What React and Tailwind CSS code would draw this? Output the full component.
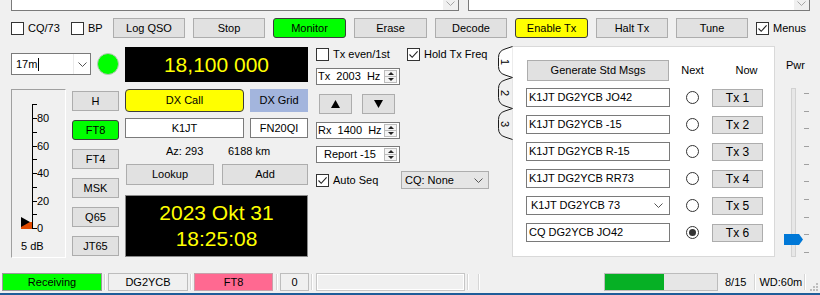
import React from "react";

// shared widget looks (Windows-ish Qt styling)
const btn =
  "flex items-center justify-center bg-[#e1e1e1] border border-[#adadad] text-black";
const hot =
  "flex items-center justify-center border border-[#3c3c3c] rounded-[3px] text-black";
const field = "bg-white border border-[#7a7a7a] flex items-center";

function Chevron({ color = "#555" }) {
  return (
    <svg width="9" height="5" viewBox="0 0 9 5">
      <path d="M0.5 0.5 L4.5 4.5 L8.5 0.5" fill="none" stroke={color} strokeWidth="1" />
    </svg>
  );
}

function Check({ checked, label, className = "" }) {
  return (
    <div className={"flex items-center gap-[4px] " + className}>
      <div className="w-[13px] h-[13px] shrink-0 border border-[#333] bg-white flex items-center justify-center">
        {checked && (
          <svg width="11" height="11" viewBox="0 0 11 11">
            <path d="M1.5 5.5 L4.2 8.3 L9.6 2.4" fill="none" stroke="#222" strokeWidth="1.1" />
          </svg>
        )}
      </div>
      <span>{label}</span>
    </div>
  );
}

function Pane({ w }) {
  return (
    <div className={w + " h-[11px] flex bg-white border-x border-b border-[#7a7a7a]"}>
      <div className="flex-1" />
      <div className="w-[15px] bg-[#f0f0f0] flex justify-center pt-[1px]">
        <Chevron color="#a6a6a6" />
      </div>
    </div>
  );
}

function Spin({ children, pad = "pl-[1px]" }) {
  return (
    <div className={field + " w-[84px] h-[17px]"}>
      <div className={"flex-1 whitespace-pre " + pad}>{children}</div>
      <div className="w-[13px] h-[13px] mr-[2px] border border-[#bcbcbc] bg-[#f4f4f4] flex flex-col">
        <div className="flex-1 flex items-center justify-center border-b border-[#bcbcbc]">
          <svg width="6" height="3" viewBox="0 0 6 3">
            <path d="M0 3 L3 0 L6 3Z" fill="#222" />
          </svg>
        </div>
        <div className="flex-1 flex items-center justify-center">
          <svg width="6" height="3" viewBox="0 0 6 3">
            <path d="M0 0 L3 3 L6 0Z" fill="#222" />
          </svg>
        </div>
      </div>
    </div>
  );
}

function Meter() {
  const ticks = [0, 10, 20, 30, 40, 50, 60, 70, 80, 90];
  return (
    <div className="w-[55px] h-[169px] border-l border-t border-[#a0a0a0] border-r border-r-white border-b border-b-white">
      <svg width="53" height="167" viewBox="0 0 53 167">
        <line x1="20.5" y1="14" x2="20.5" y2="139" stroke="#000" />
        {ticks.map((v) => {
          const y = Math.round(138 - v * 1.375) + 0.5;
          return <line key={v} x1="20" y1={y} x2="25" y2={y} stroke="#000" />;
        })}
        {[0, 20, 40, 60, 80].map((v) => (
          <text
            key={v}
            x="25"
            y={Math.round(138 - v * 1.375) + 4}
            fontSize="11"
            fontFamily="Liberation Sans, Arial, sans-serif"
            fill="#000"
          >
            {v}
          </text>
        ))}
        <rect x="9" y="132" width="11" height="7" fill="#e04a00" />
        <path d="M9 127 L18 132 L9 137Z" fill="#000" />
        <text x="9" y="160" fontSize="11" fontFamily="Liberation Sans, Arial, sans-serif" fill="#000">
          5 dB
        </text>
      </svg>
    </div>
  );
}

function Tabs() {
  const tab = (k) => {
    const T = 31 * k + 0.5;
    const B = T + 31;
    return {
      fill: `M15.5 ${T} L8 ${T + 2.5} Q1.5 ${T + 4.5} 1.5 ${T + 11} L1.5 ${B - 11} Q1.5 ${B - 4.5} 8 ${B - 2.5} L15.5 ${B} Z`,
      stroke: `M15.5 ${T} L8 ${T + 2.5} Q1.5 ${T + 4.5} 1.5 ${T + 11} L1.5 ${B - 11} Q1.5 ${B - 4.5} 8 ${B - 2.5} L15.5 ${B}`,
      mid: (T + B) / 2,
    };
  };
  const t = [tab(0), tab(1), tab(2)];
  return (
    <svg width="16" height="100" viewBox="0 0 16 100" className="relative z-10 -mr-px shrink-0">
      {[2, 1, 0].map((i) => (
        <g key={i}>
          <path d={t[i].fill} fill={i === 0 ? "#ffffff" : "#f0f0f0"} />
          <path d={t[i].stroke} fill="none" stroke="#1a1a1a" strokeWidth="1" />
          <text
            transform={`translate(4 ${t[i].mid}) rotate(90)`}
            textAnchor="middle"
            fontSize="11"
            fontFamily="Liberation Sans, Arial, sans-serif"
            fill="#000"
          >
            {i + 1}
          </text>
        </g>
      ))}
    </svg>
  );
}

function Radio({ on }) {
  return (
    <div className="w-[13px] h-[13px] rounded-full border border-[#333] bg-white flex items-center justify-center">
      {on && <div className="w-[7px] h-[7px] rounded-full bg-[#333]" />}
    </div>
  );
}

const msgs = [
  "K1JT DG2YCB JO42",
  "K1JT DG2YCB -15",
  "K1JT DG2YCB R-15",
  "K1JT DG2YCB RR73",
  "K1JT DG2YCB 73",
  "CQ DG2YCB JO42",
];

function PwrSlider() {
  const ticks = [5, 23, 40, 58, 76, 93, 111, 129, 146, 164];
  return (
    <svg width="46" height="170" viewBox="0 0 46 170">
      <rect x="16.5" y="0.5" width="4" height="168" fill="#e7e7e7" stroke="#d2d2d2" />
      {ticks.map((y) => (
        <line key={y} x1="29" y1={y + 0.5} x2="34" y2={y + 0.5} stroke="#a0a0a0" />
      ))}
      <path d="M9 146 L24 146 L28 151.5 L24 157 L9 157Z" fill="#0078d7" />
    </svg>
  );
}

function Sep({ className = "" }) {
  return <div className={"w-[2px] h-[16px] border-l border-[#d6d6d6] border-r border-r-white " + className} />;
}

export default function App() {
  return (
    <div className="w-[820px] h-[295px] overflow-hidden bg-[#f0f0f0] text-[11px] leading-none text-black font-['Liberation_Sans',Arial,sans-serif] flex flex-col">
      {/* bottom edge of the decode panes */}
      <div className="flex h-[11px] pl-[11px] gap-[9px] shrink-0">
        <Pane w="w-[448px]" />
        <Pane w="w-[342px]" />
      </div>

      {/* control buttons */}
      <div className="mt-[7px] h-[20px] flex items-center pl-[11px] shrink-0">
        <Check label="CQ/73" className="w-[60px]" />
        <Check label="BP" className="w-[42px]" />
        <div className="flex gap-[8px] h-[20px]">
          <div className={btn + " w-[72px]"}>Log QSO</div>
          <div className={btn + " w-[72px]"}>Stop</div>
          <div className={hot + " w-[73px] bg-[#00ff00]"}>Monitor</div>
          <div className={btn + " w-[73px]"}>Erase</div>
          <div className={btn + " w-[72px]"}>Decode</div>
          <div className={hot + " w-[73px] bg-[#ffff00]"}>Enable Tx</div>
          <div className={btn + " w-[72px]"}>Halt Tx</div>
          <div className={btn + " w-[72px]"}>Tune</div>
        </div>
        <Check checked label="Menus" className="ml-[8px]" />
      </div>

      {/* main area */}
      <div className="mt-[8px] h-[212px] flex pl-[11px] shrink-0">
        {/* band + meter + modes */}
        <div className="w-[108px] flex flex-col">
          <div className="mt-[7px] flex items-center gap-[6px]">
            <div className={field + " w-[80px] h-[22px]"}>
              <div className="flex-1 flex items-center pl-[4px]">
                17m<span className="ml-[1px] w-px h-[13px] bg-black" />
              </div>
              <div className="w-[17px] h-[20px] border-l border-[#eaeaea] flex items-center justify-center">
                <Chevron />
              </div>
            </div>
            <div className="w-[22px] h-[22px] rounded-full bg-[#00ff00] border border-[#b8c8b8]" />
          </div>
          <div className="mt-[14px] flex gap-[6px]">
            <Meter />
            <div className="w-[47px] pt-[2px] flex flex-col gap-[9px]">
              <div className={btn + " h-[20px]"}>H</div>
              <div className={hot + " h-[20px] bg-[#00ff00]"}>FT8</div>
              <div className={btn + " h-[20px]"}>FT4</div>
              <div className={btn + " h-[20px]"}>MSK</div>
              <div className={btn + " h-[20px]"}>Q65</div>
              <div className={btn + " h-[20px]"}>JT65</div>
            </div>
          </div>
        </div>

        {/* frequency, DX call, clock */}
        <div className="ml-[6px] w-[183px] flex flex-col">
          <div className="mt-[1px] h-[35px] bg-black text-[#ffff00] text-[21px] flex items-center justify-center">
            18,100 000
          </div>
          <div className="mt-[7px] h-[23px] flex gap-[6px]">
            <div className={hot + " w-[119px] bg-[#ffff00] rounded-[4px]"}>DX Call</div>
            <div className="w-[58px] bg-[#a3b5dd] flex items-center justify-center">DX Grid</div>
          </div>
          <div className="mt-[6px] h-[20px] flex gap-[6px]">
            <div className={field + " w-[119px] justify-center"}>K1JT</div>
            <div className={field + " w-[58px] justify-center"}>FN20QI</div>
          </div>
          <div className="mt-[4px] h-[18px] flex items-center pl-[41px]">
            <span className="w-[62px]">Az: 293</span>
            <span>6188 km</span>
          </div>
          <div className="mt-[4px] h-[21px] flex">
            <div className={btn + " ml-[1px] w-[88px]"}>Lookup</div>
            <div className={btn + " ml-[8px] w-[86px]"}>Add</div>
          </div>
          <div className="mt-[10px] h-[62px] bg-black border border-[#8a8a8a] text-[#ffff00] text-[21px] leading-[26px] flex flex-col items-center justify-center">
            <span>2023 Okt 31</span>
            <span>18:25:08</span>
          </div>
        </div>

        {/* Tx / Rx frequency controls */}
        <div className="ml-[8px] w-[173px] flex flex-col">
          <div className="mt-[1px] h-[14px] flex items-center">
            <Check label="Tx even/1st" className="w-[91px]" />
            <Check checked label="Hold Tx Freq" />
          </div>
          <div className="mt-[7px]">
            <Spin>{"Tx  2003  Hz"}</Spin>
          </div>
          <div className="mt-[9px] h-[20px] flex">
            <div className={btn + " ml-[3px] w-[33px]"}>
              <svg width="9" height="8" viewBox="0 0 9 8">
                <path d="M0 8 L4.5 0 L9 8Z" fill="#000" />
              </svg>
            </div>
            <div className={btn + " ml-[10px] w-[33px]"}>
              <svg width="9" height="8" viewBox="0 0 9 8">
                <path d="M0 0 L4.5 8 L9 0Z" fill="#000" />
              </svg>
            </div>
          </div>
          <div className="mt-[8px]">
            <Spin>{"Rx  1400  Hz"}</Spin>
          </div>
          <div className="mt-[7px]">
            <Spin pad="pl-[7px]">Report -15</Spin>
          </div>
          <div className="mt-[8px] h-[18px] flex items-center">
            <Check checked label="Auto Seq" className="w-[85px]" />
            <div className="w-[88px] h-[18px] bg-[#e5e5e5] border border-[#adadad] flex items-center pl-[3px]">
              <span className="flex-1">CQ: None</span>
              <span className="mr-[5px] flex">
                <Chevron />
              </span>
            </div>
          </div>
        </div>

        {/* message tabs */}
        <div className="ml-[8px] flex">
          <Tabs />
          <div className="w-[263px] h-[211px] bg-white border border-[#d9d9d9] flex flex-col pl-[13px]">
            <div className="mt-[13px] h-[21px] flex items-center">
              <div className={btn + " ml-[1px] w-[142px] h-[21px]"}>Generate Std Msgs</div>
              <span className="w-[45px] text-center ml-[1px]">Next</span>
              <span className="w-[51px] text-center ml-[6px]">Now</span>
            </div>
            <div className="mt-[7px] flex flex-col gap-[8px]">
              {msgs.map((m, i) => (
                <div key={m} className="h-[19px] flex items-center">
                  <div className={field + " w-[144px] h-[19px] pl-[2px]"}>
                    <span className={"flex-1 " + (i === 4 ? "pl-[2px]" : "")}>{m}</span>
                    {i === 4 && (
                      <span className="mr-[6px] flex">
                        <Chevron />
                      </span>
                    )}
                  </div>
                  <div className="ml-[16px]">
                    <Radio on={i === 5} />
                  </div>
                  <div className={btn + " ml-[13px] w-[51px] h-[18px] text-[12px]"}>Tx {i + 1}</div>
                </div>
              ))}
            </div>
          </div>
        </div>

        {/* power slider */}
        <div className="w-[46px] flex flex-col">
          <div className="mt-[13px] h-[14px] pl-[11px] flex items-center">Pwr</div>
          <div className="mt-[16px]">
            <PwrSlider />
          </div>
        </div>
      </div>

      {/* status bar */}
      <div className="mt-[15px] h-[18px] flex items-center shrink-0">
        <div className="ml-[2px] w-[100px] h-[18px] bg-[#00ff00] border border-[#9a9a9a] flex items-center justify-center">
          Receiving
        </div>
        <Sep className="ml-[2px]" />
        <div className="ml-[2px] w-[80px] h-[18px] border border-[#bdbdbd] flex items-center justify-center">
          DG2YCB
        </div>
        <Sep className="ml-[2px]" />
        <div className="ml-[2px] w-[79px] h-[18px] bg-[#ff6991] border border-[#c8a0aa] flex items-center justify-center">
          FT8
        </div>
        <Sep className="ml-[3px]" />
        <div className="ml-[2px] w-[29px] h-[18px] border border-[#bdbdbd] flex items-center justify-center">
          0
        </div>
        <Sep className="ml-[2px]" />
        <div className="ml-[3px] w-[149px] h-[18px] border border-[#c6c6c6] shadow-[inset_0_0_0_1px_#ffffff]" />
        <Sep className="ml-[2px]" />
        <Sep className="ml-[9px]" />
        <div className="ml-[124px] w-[114px] h-[18px] bg-[#e6e6e6] border border-[#bcbcbc] flex">
          <div className="w-[59px] h-full bg-[#06b025]" />
        </div>
        <span className="ml-[7px]">8/15</span>
        <Sep className="ml-[8px]" />
        <span className="ml-[3px]">WD:60m</span>
        <Sep className="ml-[2px]" />
        <svg width="8" height="8" viewBox="0 0 8 8" className="ml-auto mr-[2px] self-end">
          <g fill="#bdbdbd">
            <rect x="6" y="0" width="2" height="2" />
            <rect x="3" y="3" width="2" height="2" />
            <rect x="6" y="3" width="2" height="2" />
            <rect x="0" y="6" width="2" height="2" />
            <rect x="3" y="6" width="2" height="2" />
            <rect x="6" y="6" width="2" height="2" />
          </g>
        </svg>
      </div>

      {/* taskbar edge */}
      <div className="mt-[2px] h-[2px] bg-[#1f5d99] shrink-0" />
    </div>
  );
}
